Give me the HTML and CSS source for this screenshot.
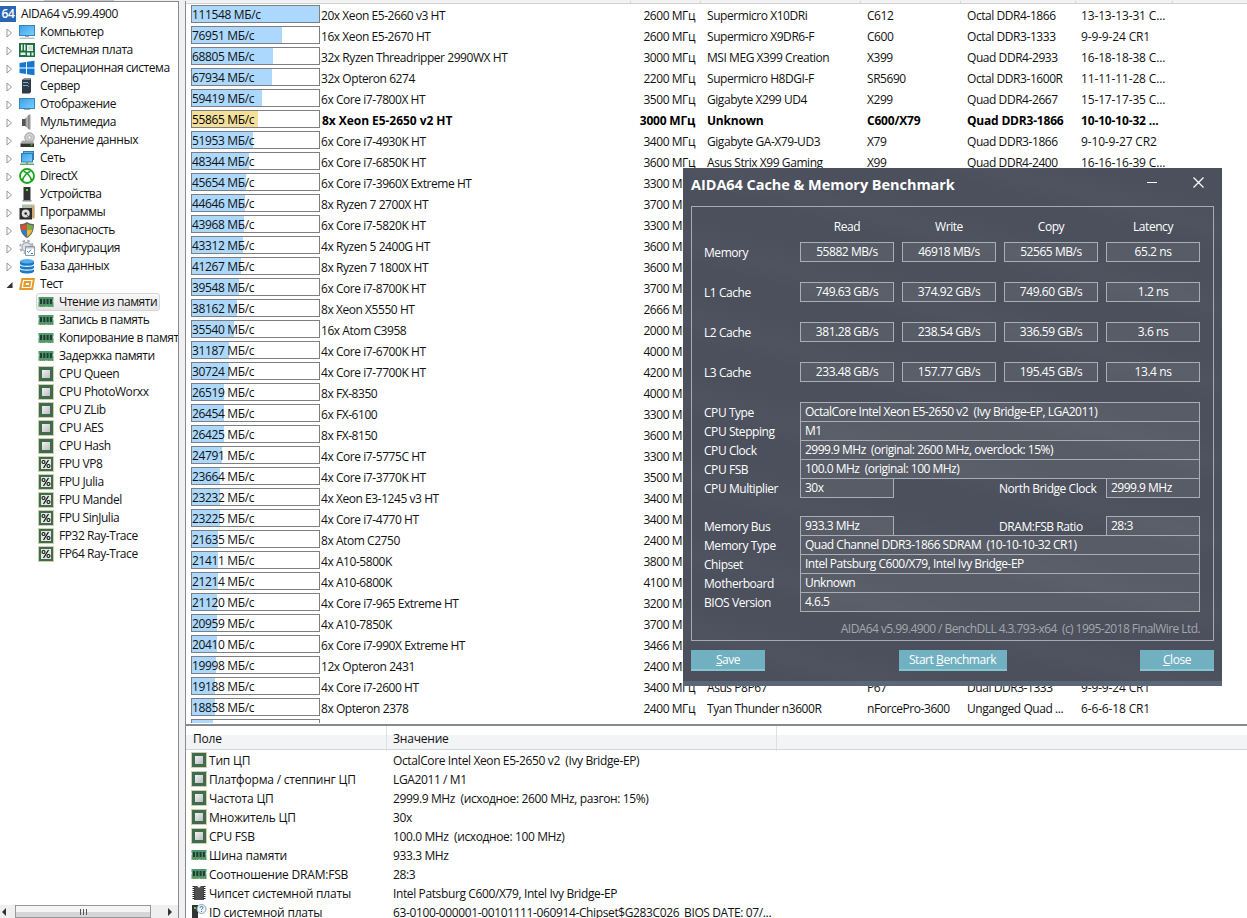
FILE: index.html
```html
<!DOCTYPE html>
<html lang="ru">
<head>
  <meta charset="UTF-8" />
  <title>AIDA64</title>
  <link rel="stylesheet" href="styles.css">
</head>
<body>

  <svg class="sprite" width="0" height="0">
    <defs>
      <linearGradient id="screen" x1="0" y1="0" x2="1" y2="1">
        <stop offset="0" stop-color="#3a9fe8" /><stop offset="1" stop-color="#7fd0fb" />
      </linearGradient>
      <linearGradient id="die" x1="0" y1="0" x2="1" y2="1">
        <stop offset="0" stop-color="#f2f2f2" /><stop offset="1" stop-color="#bdbdbd" />
      </linearGradient>
      <linearGradient id="metal" x1="0" x2="1">
        <stop offset="0" stop-color="#555" /><stop offset=".5" stop-color="#c4c4c4" /><stop offset="1" stop-color="#777" />
      </linearGradient>
    </defs>
    <symbol id="computer" viewBox="0 0 16 16">
      <rect x=".5" y="1.5" width="15" height="10" fill="url(#screen)" stroke="#3687bd" />
      <path d="M6 12h4v1H6z" fill="#9aa" /><path d="M1 13.5h14l.7 1.5H.3z" fill="#b5c4cf" />
    </symbol>
    <symbol id="board" viewBox="0 0 16 16">
      <rect x="0" y="1" width="16" height="14" fill="#1e7044" />
      <path d="M2 2.500h1.500v6H2zM5 2.500h1.500v6H5zM8 3h6v6H8zM1.500 10.500h5V13h-5zM8 10.500h3v3H8zM12.500 10.500h2v3h-2z" fill="#e8f2e9" />
      <path d="M9.500 4h4v4h-4z" fill="#c9dccd" />
    </symbol>
    <symbol id="windows" viewBox="0 0 16 16">
      <path d="M.5 3 7 2v5.600H.5zM8 1.800 15.500.8v6.800H8zM.5 8.500H7V14L.5 13zM8 8.500h7.500v6.800L8 14.200z" fill="#1677cf" />
    </symbol>
    <symbol id="server" viewBox="0 0 16 16">
      <path d="M3 2 5 .5h7V14l-1.500 1.500H3z" fill="#303a44" /><path d="M5 .5h7l-1 1.500H3z" fill="#79838c" />
      <path d="M4 4h5v1H4zM4 7h5v1H4z" fill="#7db0e0" /><path d="M9 5h1v1H9zM9 8h1v1H9z" fill="#3e97ff" />
    </symbol>
    <symbol id="display" viewBox="0 0 16 16">
      <rect x=".5" y="2.500" width="15" height="10" fill="url(#screen)" stroke="#3687bd" />
      <path d="M5 13h6v1H5z" fill="#9ab" />
    </symbol>
    <symbol id="sound" viewBox="0 0 16 16">
      <path d="M3 5h3v7H3z" fill="#555" /><path d="M6 5 10 .5v15L6 12z" fill="url(#metal)" /><path d="M10 .5h1.500v15H10z" fill="#999" />
    </symbol>
    <symbol id="storage" viewBox="0 0 16 16">
      <circle cx="10.500" cy="5.500" r="4.700" fill="#d2d2d2" stroke="#999" /><circle cx="10.500" cy="5.500" r="1.700" fill="#fff" stroke="#aaa" />
      <path d="M3 8.500h11l1 3H1.500z" fill="#aaa" /><path d="M1.500 11.500H15V15H1.500z" fill="#333" /><path d="M11.500 12.500h2v1h-2z" fill="#5ef05e" />
    </symbol>
    <symbol id="network" viewBox="0 0 16 16">
      <rect x="4.500" y="1.500" width="10" height="8" fill="#5db4ec" stroke="#2e7eb3" />
      <rect x="2.500" y="3.500" width="11" height="8.500" fill="url(#screen)" stroke="#2d7db5" />
      <path d="M7 12h2v1.500h6V15H1v-1.500h6z" fill="#66a874" />
    </symbol>
    <symbol id="directx" viewBox="0 0 16 16">
      <circle cx="8" cy="8" r="7" fill="#fff" stroke="#1aa31f" stroke-width="1.800" />
      <path d="M4.500 3.500C7 3.500 12.500 9 12.500 13M11.500 3.500C9 3.500 3.500 9 3.500 13" fill="none" stroke="#1aa31f" stroke-width="1.600" />
    </symbol>
    <symbol id="device" viewBox="0 0 16 16">
      <path d="M4.500 1h7v13h-7z" fill="#333" /><path d="M3.500 14h9v1.500h-9z" fill="#8b8b8b" /><path d="M7 3h2v2H7z" fill="#4fdc3c" />
    </symbol>
    <symbol id="programs" viewBox="0 0 16 16">
      <path d="M3 .5h12.500v14H3z" fill="#b0bfae" /><path d="M12 2h3.500v12H12z" fill="#d3a871" />
      <path d="M.5 4h12.500v11.500H.5z" fill="#2b2b2b" /><circle cx="6.700" cy="9.500" r="4" fill="#ddd" /><circle cx="6.700" cy="9.500" r="1.300" fill="#222" /><path d="M7 9.500 9.500 14h2z" fill="#555" />
    </symbol>
    <symbol id="shield" viewBox="0 0 16 16">
      <path d="M8 0C5.500 1.800 3 2.200 1 2.200 1 9 3 13 8 16c5-3 7-7 7-13.800C13 2.200 10.500 1.800 8 0z" fill="#60646b" />
      <path d="M8 1.500C6 3 4 3.300 2 3.300c0 1.700.2 3.300.6 4.700H8z" fill="#d9502c" /><path d="M8 1.500c2 1.500 4 1.800 6 1.800 0 1.700-.2 3.300-.6 4.700H8z" fill="#72b043" />
      <path d="M2.600 8C3.600 11.200 5.500 13.300 8 14.800V8z" fill="#2b7dd0" /><path d="M13.400 8C12.400 11.200 10.500 13.300 8 14.800V8z" fill="#f4b72b" />
    </symbol>
    <symbol id="config" viewBox="0 0 16 16">
      <circle cx="7.500" cy="7" r="6.300" fill="none" stroke="#aab2b8" stroke-width="2" stroke-dasharray="2.600 2.350" />
      <circle cx="7.500" cy="7" r="4.500" fill="#e0e4e7" stroke="#a5adb3" stroke-width="1.300" />
      <path d="M6.500 6.500h9v9h-9z" fill="#fff" stroke="#8e9ba5" /><path d="M7 7h8v1.500H7z" fill="#b5c0c8" /><path d="m8 11 1.500 1.500L12 9.700" fill="none" stroke="#2f86d0" /><path d="M12 13h2v1h-2z" fill="#2f86d0" />
    </symbol>
    <symbol id="database" viewBox="0 0 16 16">
      <path d="M1 3.200v10c0 3 14 3 14 0v-10z" fill="#1b79c1" /><ellipse cx="8" cy="3.200" rx="7" ry="2.200" fill="#55aee8" />
      <path d="M1 6.500c1 2.500 13 2.500 14 0M1 10.300c1 2.500 13 2.500 14 0" fill="none" stroke="#e8f5ff" stroke-width="1.200" />
    </symbol>
    <symbol id="test" viewBox="0 0 16 16">
      <path d="M2.500 2H16l-2 12H0z" fill="#e69a2c" /><path d="M4.500 4.500h8.500l-1.200 7H3.300z" fill="none" stroke="#fff" stroke-width="1.200" />
      <path d="M7 7h3l-.4 2H6.600z" fill="#fff" />
    </symbol>
    <symbol id="memory" viewBox="0 0 16 16">
      <path d="M.5 3h15v3l-.7 1 .7 1v5H9l-1-.8-1 .8H.5V8l.7-1-.7-1z" fill="#51986f" />
      <path d="M2 5h2v5H2zM5.300 5h2v5h-2zM8.600 5h2v5h-2zM11.900 5h2v5h-2z" fill="#233b30" />
      <path d="M1 12.500h6M9 12.500h6" stroke="#a2ab5a" stroke-dasharray="1 1" />
    </symbol>
    <symbol id="cpu" viewBox="0 0 16 16">
      <rect x=".5" y=".5" width="15" height="15" fill="none" stroke="#a39f4e" stroke-dasharray="1 1" />
      <rect x="1" y="1" width="14" height="14" fill="#3f6c50" /><rect x="4" y="4" width="8" height="8" fill="url(#die)" />
    </symbol>
    <symbol id="fpu" viewBox="0 0 16 16">
      <rect x=".5" y=".5" width="15" height="15" fill="none" stroke="#a39f4e" stroke-dasharray="1 1" />
      <rect x="1" y="1" width="14" height="14" fill="#3f6c50" /><rect x="3" y="3" width="10" height="10" fill="#e2e8e2" />
      <circle cx="5.500" cy="6" r="1.500" fill="none" stroke="#111" stroke-width="1.100" /><circle cx="10.500" cy="10" r="1.500" fill="none" stroke="#111" stroke-width="1.100" /><path d="m10.500 4-5 8" stroke="#111" stroke-width="1.200" />
    </symbol>
    <symbol id="chipset" viewBox="0 0 16 16">
      <path d="M3 1h3.500a1.500 1.500 0 0 0 3 0H13v14H3z" fill="#4f4f4f" />
      <path d="M2.500 1v14M13.500 1v14" stroke="#222" stroke-width="2" stroke-dasharray="1 1" />
    </symbol>
    <symbol id="boardid" viewBox="0 0 16 16">
      <path d="M1 1h6v14H1z" fill="#333" /><path d="M3 3h2v2H3z" fill="#4fdc3c" />
      <circle cx="10.500" cy="5" r="4.500" fill="#eef5fa" stroke="#8aa5b8" /><path d="M9 4c0-2 3-2 3-.3 0 1-1.500 1.200-1.500 2.300M10.500 7v1" fill="none" stroke="#336d9b" />
    </symbol>
  </svg>

  <div class="top-strip"><span></span></div>

  <div class="window">
    <div class="sidebar">
      <ul class="tree" id="tree"></ul>
      <div class="scrollbar">
        <span class="arrow left"></span>
        <span class="thumb"><i></i><i></i><i></i></span>
        <span class="arrow right"></span>
      </div>
    </div>

    <div class="main">
      <div class="results">
        <div class="results-head"><span></span><span></span><span></span><span></span><span></span><span></span></div>
        <div id="results"></div>
      </div>
      <div class="details">
        <div class="details-head"><span>Поле</span><span>Значение</span></div>
        <div id="details"></div>
      </div>
    </div>
  </div>

  <div class="dialog">
    <div class="title-bar">
      <h1>AIDA64 Cache &amp; Memory Benchmark</h1>
      <svg class="minimize" width="11" height="11" viewBox="0 0 11 11"><path d="M0 5.500h10" stroke="#fff" /></svg>
      <svg width="11" height="11" viewBox="0 0 11 11"><path d="m.5.5 10 10m0-10-10 10" stroke="#fff" stroke-width="1.200" /></svg>
    </div>
    <div class="group">
      <div class="scores scores-head">
        <span></span><b>Read</b><b>Write</b><b>Copy</b><b>Latency</b>
      </div>
      <div class="scores">
        <span>Memory</span><em>55882 MB/s</em><em>46918 MB/s</em><em>52565 MB/s</em><em>65.2 ns</em>
        <span>L1 Cache</span><em>749.63 GB/s</em><em>374.92 GB/s</em><em>749.60 GB/s</em><em>1.2 ns</em>
        <span>L2 Cache</span><em>381.28 GB/s</em><em>238.54 GB/s</em><em>336.59 GB/s</em><em>3.6 ns</em>
        <span>L3 Cache</span><em>233.48 GB/s</em><em>157.77 GB/s</em><em>195.45 GB/s</em><em>13.4 ns</em>
      </div>
      <div class="info">
        <div class="info-row"><span>CPU Type</span><em>OctalCore Intel Xeon E5-2650 v2&nbsp; (Ivy Bridge-EP, LGA2011)</em></div>
        <div class="info-row"><span>CPU Stepping</span><em>M1</em></div>
        <div class="info-row"><span>CPU Clock</span><em>2999.9 MHz&nbsp; (original: 2600 MHz, overclock: 15%)</em></div>
        <div class="info-row"><span>CPU FSB</span><em>100.0 MHz&nbsp; (original: 100 MHz)</em></div>
        <div class="info-row split"><span>CPU Multiplier</span><em>30x</em><span>North Bridge Clock</span><em>2999.9 MHz</em></div>
      </div>
      <div class="info">
        <div class="info-row split"><span>Memory Bus</span><em>933.3 MHz</em><span>DRAM:FSB Ratio</span><em>28:3</em></div>
        <div class="info-row"><span>Memory Type</span><em>Quad Channel DDR3-1866 SDRAM&nbsp; (10-10-10-32 CR1)</em></div>
        <div class="info-row"><span>Chipset</span><em>Intel Patsburg C600/X79, Intel Ivy Bridge-EP</em></div>
        <div class="info-row"><span>Motherboard</span><em>Unknown</em></div>
        <div class="info-row"><span>BIOS Version</span><em>4.6.5</em></div>
      </div>
      <p class="version">AIDA64 v5.99.4900 / BenchDLL 4.3.793-x64&nbsp; (c) 1995-2018 FinalWire Ltd.</p>
    </div>
    <div class="buttons">
      <button><u>S</u>ave</button>
      <button class="wide">Start <u>B</u>enchmark</button>
      <button><u>C</u>lose</button>
    </div>
  </div>

  <script src="script.js"></script>
</body>
</html>
```

FILE: styles.css
```css
* {
  box-sizing: border-box;
}
body {
  margin: 0;
  width: 1247px;
  height: 918px;
  overflow: hidden;
  position: relative;
  display: flex;
  flex-direction: column;
  background: #f0f0f0;
  color: #111;
  font-family: "Open Sans", "Noto Sans", sans-serif;
  font-size: 12px;
  line-height: 16px;
  letter-spacing: -0.44px;
  white-space: nowrap;
}
em, b {
  font-style: normal;
  font-weight: normal;
}
.sprite {
  position: absolute;
}
.top-strip {
  height: 1px;
  flex: none;
  padding-left: 44px;
}
.top-strip span {
  display: block;
  width: 70px;
  height: 1px;
  background: #c4c4c4;
}
.window {
  display: flex;
  flex: 1;
  min-height: 0;
  gap: 6px;
}

/* tree */
.sidebar {
  width: 179px;
  flex: none;
  display: flex;
  flex-direction: column;
  background: #fff;
  border-top: 1px solid #868a91;
  border-right: 1px solid #868a91;
}
.tree {
  flex: 1;
  margin: 0;
  padding: 3px 0 0;
  list-style: none;
  overflow: hidden;
}
.tree li {
  display: flex;
  align-items: center;
  height: 18px;
  padding-left: 6px;
}
.tree .root {
  padding-left: 0;
}
.tree .child {
  padding-left: 36px;
}
.tree svg {
  width: 16px;
  height: 16px;
  flex: none;
}
.logo {
  width: 16px;
  height: 16px;
  margin-right: 5px;
  background: #2a66b5;
  color: #fff;
  font-size: 12px;
  font-weight: 600;
  text-align: center;
}
.expander {
  width: 13px;
  height: 16px;
  flex: none;
  padding-top: 4px;
}
.tree .expander svg {
  display: block;
  width: 7px;
  height: 10px;
}
.tree .label {
  padding-left: 5px;
}
.tree .item {
  display: flex;
  align-items: center;
  height: 18px;
  padding: 0 2px 0 1px;
  border: 1px solid transparent;
}
.tree .selected {
  background: linear-gradient(#fafafa, #e6e6e6);
  border-color: #d6d6d6;
  border-radius: 3px;
}
.scrollbar {
  display: flex;
  justify-content: space-between;
  align-items: center;
  height: 13px;
  padding: 0 6px 0 2px;
  background: #efefef;
}
.arrow {
  border: 4px solid transparent;
}
.arrow.left {
  border-left: 0;
  border-right-color: #333;
}
.arrow.right {
  border-right: 0;
  border-left-color: #333;
}
.thumb {
  display: flex;
  justify-content: center;
  align-items: center;
  gap: 2px;
  width: 136px;
  height: 13px;
  margin-right: 8px;
  border: 1px solid #989898;
  background: linear-gradient(#f5f5f5 50%, #d5d5d8 50%);
}
.thumb i {
  width: 1px;
  height: 6px;
  background: #555;
}

/* benchmark list */
.main {
  flex: 1;
  min-width: 0;
  display: flex;
  flex-direction: column;
  border-left: 1px solid #868a91;
  background: #fff;
}
.results {
  height: 722px;
  margin-bottom: 1px;
  overflow: hidden;
}
.results-head {
  display: grid;
  grid-template-columns: 445px 70px 160px 100px 115px 97px;
  height: 3px;
  margin-bottom: 1px;
  background: #f2f3f4;
  border-bottom: 1px solid #cfd1d3;
}
.results-head span {
  border-right: 1px solid #d5d7da;
}
.result {
  display: grid;
  grid-template-columns: 129px 240px 135px 172px 100px 114px 90px;
  align-items: start;
  height: 21px;
  padding-left: 5px;
}
.result span {
  padding-top: 3px;
}
.result .name {
  padding-left: 1px;
}
.result .clock {
  text-align: right;
}
.result .board {
  padding-left: 12px;
}
.result .timings {
  letter-spacing: -0.15px;
}
.meter {
  position: relative;
  height: 18px;
  border: 1px solid #7d7f84;
}
.meter i {
  position: absolute;
  left: 0;
  top: 0;
  bottom: 0;
  max-width: 127px;
  background: #acd8fd;
}
.meter b {
  position: relative;
  display: block;
  margin-top: 1px;
  letter-spacing: -0.35px;
}
.current {
  color: #000;
}
.current span {
  font-weight: bold;
  letter-spacing: -0.2px;
}
.current .name {
  padding-left: 2px;
  letter-spacing: -0.05px;
}
.current .meter i {
  background: #f3df98;
}

/* field / value list */
.details {
  flex: 1;
  overflow: hidden;
  border-top: 2px solid #868a91;
  letter-spacing: -0.38px;
}
.details-head {
  display: grid;
  grid-template-columns: 201px 390px;
  height: 24px;
  line-height: 25px;
  background: linear-gradient(#fff 40%, #f3f4f6 40%);
  border-bottom: 1px solid #d5d5d5;
  letter-spacing: -0.2px;
}
.details-head span {
  padding-left: 6px;
  border-right: 1px solid #dfe0e2;
}
.details-head span:first-child {
  padding-left: 7px;
}
.detail {
  display: grid;
  grid-template-columns: 18px 184px auto;
  align-items: center;
  height: 19px;
  padding-left: 5px;
}
.detail svg {
  width: 16px;
  height: 16px;
}
.detail span {
  padding-top: 2px;
}
.detail .field {
  letter-spacing: -0.2px;
}

/* cache & memory dialog */
.dialog {
  position: absolute;
  left: 683px;
  top: 168px;
  width: 539px;
  height: 518px;
  padding: 0 8px;
  background: repeating-linear-gradient(15deg, #4b505c 0 30px, #4e535f 50px, #4b505c 75px);
  border-bottom: 5px solid #5b6779;
  color: #fff;
}
.title-bar {
  display: flex;
  align-items: center;
  height: 38px;
  padding-right: 10px;
}
.title-bar h1 {
  flex: 1;
  margin: -4px 0 0;
  font-size: 14.5px;
  letter-spacing: -0.05px;
}
.title-bar svg {
  margin-top: -10px;
}
.title-bar .minimize {
  margin-right: 35px;
}
.group {
  height: 435px;
  padding: 10px 13px 0 12px;
  border: 1px solid #a6aab2;
}
.scores {
  display: grid;
  grid-template-columns: 88px repeat(4, 94px);
  grid-auto-rows: 20px;
  gap: 20px 8px;
  margin-bottom: 20px;
  text-align: center;
}
.scores-head {
  margin-bottom: 5px;
}
.scores b {
  line-height: 20px;
}
.scores span {
  line-height: 21px;
  text-align: left;
}
.scores em, .info em {
  line-height: 18px;
  border: 1px solid #a9adb5;
  background: rgba(255, 255, 255, 0.07);
}
.info {
  padding-bottom: 19px;
}
.info-row {
  display: grid;
  grid-template-columns: 96px 400px;
  height: 19px;
}
.info-row span {
  line-height: 21px;
}
.info-row.split {
  grid-template-columns: 96px 94px 105px 107px 94px;
}
.info-row.split span:nth-of-type(2) {
  grid-column: 4;
}
.info em {
  height: 20px;
  padding-left: 4px;
  letter-spacing: -0.5px;
}
.version {
  margin: -9px 0 0;
  color: #a4a7ad;
  letter-spacing: -0.57px;
  text-align: right;
}
.buttons {
  display: flex;
  justify-content: space-between;
  padding-top: 9px;
}
.buttons button {
  width: 74px;
  height: 21px;
  padding: 0;
  border: 0;
  border-bottom: 2px solid #87c4d2;
  background: #70b0c1;
  color: #fff;
  font: inherit;
  letter-spacing: inherit;
}
.buttons .wide {
  width: 108px;
}
```

FILE: script.js
```js
const icon = (id) => `<svg><use href="#${id}"/></svg>`;

const sections = [
  ['computer', 'Компьютер'], ['board', 'Системная плата'], ['windows', 'Операционная система'],
  ['server', 'Сервер'], ['display', 'Отображение'], ['sound', 'Мультимедиа'],
  ['storage', 'Хранение данных'], ['network', 'Сеть'], ['directx', 'DirectX'],
  ['device', 'Устройства'], ['programs', 'Программы'], ['shield', 'Безопасность'],
  ['config', 'Конфигурация'], ['database', 'База данных'], ['test', 'Тест']
];

const tests = [
  ['memory', 'Чтение из памяти'], ['memory', 'Запись в память'], ['memory', 'Копирование в память'],
  ['memory', 'Задержка памяти'], ['cpu', 'CPU Queen'], ['cpu', 'CPU PhotoWorxx'], ['cpu', 'CPU ZLib'],
  ['cpu', 'CPU AES'], ['cpu', 'CPU Hash'], ['fpu', 'FPU VP8'], ['fpu', 'FPU Julia'],
  ['fpu', 'FPU Mandel'], ['fpu', 'FPU SinJulia'], ['fpu', 'FP32 Ray-Trace'], ['fpu', 'FP64 Ray-Trace']
];

// speed, cpu, clock, board, chipset, memory, timings
const results = [
  [111548, '20x Xeon E5-2660 v3 HT', 2600, 'Supermicro X10DRi', 'C612', 'Octal DDR4-1866', '13-13-13-31 C...'],
  [76951, '16x Xeon E5-2670 HT', 2600, 'Supermicro X9DR6-F', 'C600', 'Octal DDR3-1333', '9-9-9-24 CR1'],
  [68805, '32x Ryzen Threadripper 2990WX HT', 3000, 'MSI MEG X399 Creation', 'X399', 'Quad DDR4-2933', '16-18-18-38 C...'],
  [67934, '32x Opteron 6274', 2200, 'Supermicro H8DGI-F', 'SR5690', 'Octal DDR3-1600R', '11-11-11-28 C...'],
  [59419, '6x Core i7-7800X HT', 3500, 'Gigabyte X299 UD4', 'X299', 'Quad DDR4-2667', '15-17-17-35 C...'],
  [55865, '8x Xeon E5-2650 v2 HT', 3000, 'Unknown', 'C600/X79', 'Quad DDR3-1866', '10-10-10-32 ...'],
  [51953, '6x Core i7-4930K HT', 3400, 'Gigabyte GA-X79-UD3', 'X79', 'Quad DDR3-1866', '9-10-9-27 CR2'],
  [48344, '6x Core i7-6850K HT', 3600, 'Asus Strix X99 Gaming', 'X99', 'Quad DDR4-2400', '16-16-16-39 C...'],
  [45654, '6x Core i7-3960X Extreme HT', 3300],
  [44646, '8x Ryzen 7 2700X HT', 3700],
  [43968, '6x Core i7-5820K HT', 3300],
  [43312, '4x Ryzen 5 2400G HT', 3600],
  [41267, '8x Ryzen 7 1800X HT', 3600],
  [39548, '6x Core i7-8700K HT', 3700],
  [38162, '8x Xeon X5550 HT', 2666],
  [35540, '16x Atom C3958', 2000],
  [31187, '4x Core i7-6700K HT', 4000],
  [30724, '4x Core i7-7700K HT', 4200],
  [26519, '8x FX-8350', 4000],
  [26454, '6x FX-6100', 3300],
  [26425, '8x FX-8150', 3600],
  [24791, '4x Core i7-5775C HT', 3300],
  [23664, '4x Core i7-3770K HT', 3500],
  [23232, '4x Xeon E3-1245 v3 HT', 3400],
  [23225, '4x Core i7-4770 HT', 3400],
  [21635, '8x Atom C2750', 2400],
  [21411, '4x A10-5800K', 3800],
  [21214, '4x A10-6800K', 4100],
  [21120, '4x Core i7-965 Extreme HT', 3200],
  [20959, '4x A10-7850K', 3700],
  [20410, '6x Core i7-990X Extreme HT', 3466],
  [19998, '12x Opteron 2431', 2400],
  [19188, '4x Core i7-2600 HT', 3400, 'Asus P8P67', 'P67', 'Dual DDR3-1333', '9-9-9-24 CR1'],
  [18858, '8x Opteron 2378', 2400, 'Tyan Thunder n3600R', 'nForcePro-3600', 'Unganged Quad ...', '6-6-6-18 CR1'],
  [17400, '', '']
];

const details = [
  ['cpu', 'Тип ЦП', 'OctalCore Intel Xeon E5-2650 v2&nbsp; (Ivy Bridge-EP)'],
  ['cpu', 'Платформа / степпинг ЦП', 'LGA2011 / M1'],
  ['cpu', 'Частота ЦП', '2999.9 MHz&nbsp; (исходное: 2600 MHz, разгон: 15%)'],
  ['cpu', 'Множитель ЦП', '30x'],
  ['cpu', 'CPU FSB', '100.0 MHz&nbsp; (исходное: 100 MHz)'],
  ['memory', 'Шина памяти', '933.3 MHz'],
  ['memory', 'Соотношение DRAM:FSB', '28:3'],
  ['chipset', 'Чипсет системной платы', 'Intel Patsburg C600/X79, Intel Ivy Bridge-EP'],
  ['boardid', 'ID системной платы', '63-0100-000001-00101111-060914-Chipset$G283C026_BIOS DATE: 07/...']
];

const columns = ['board', 'chipset', 'memory', 'timings'];

const closed = '<svg viewBox="0 0 7 10"><path d="M1 1v8l4.500-4z" fill="#fff" stroke="#999"/></svg>';
const opened = '<svg viewBox="0 0 7 10"><path d="M6.500 2v6h-6z" fill="#333"/></svg>';

document.getElementById('tree').innerHTML =
  '<li class="root"><span class="logo">64</span>AIDA64 v5.99.4900</li>' +
  sections.map(([id, text]) => `<li><span class="expander">${id === 'test' ? opened : closed}</span>${icon(id)}<span class="label">${text}</span></li>`).join('') +
  tests.map(([id, text], i) => `<li class="child"><span class="item${i === 0 ? ' selected' : ''}">${icon(id)}<span class="label">${text}</span></span></li>`).join('');

const best = results[0][0];

document.getElementById('results').innerHTML = results.map(([speed, cpu, clock, ...rest]) => `
  <div class="result${speed === 55865 ? ' current' : ''}">
    <div class="meter"><i style="width: ${(speed / best * 129 + 1).toFixed(1)}px"></i>${cpu ? `<b>${speed} МБ/с</b>` : ''}</div>
    <span class="name">${cpu}</span>
    <span class="clock">${clock ? clock + ' МГц' : ''}</span>
    ${rest.map((text, i) => `<span class="${columns[i]}">${text}</span>`).join('')}
  </div>`).join('');

document.getElementById('details').innerHTML = details.map(([id, field, value]) =>
  `<div class="detail">${icon(id)}<span class="field">${field}</span><span>${value}</span></div>`).join('');
```
